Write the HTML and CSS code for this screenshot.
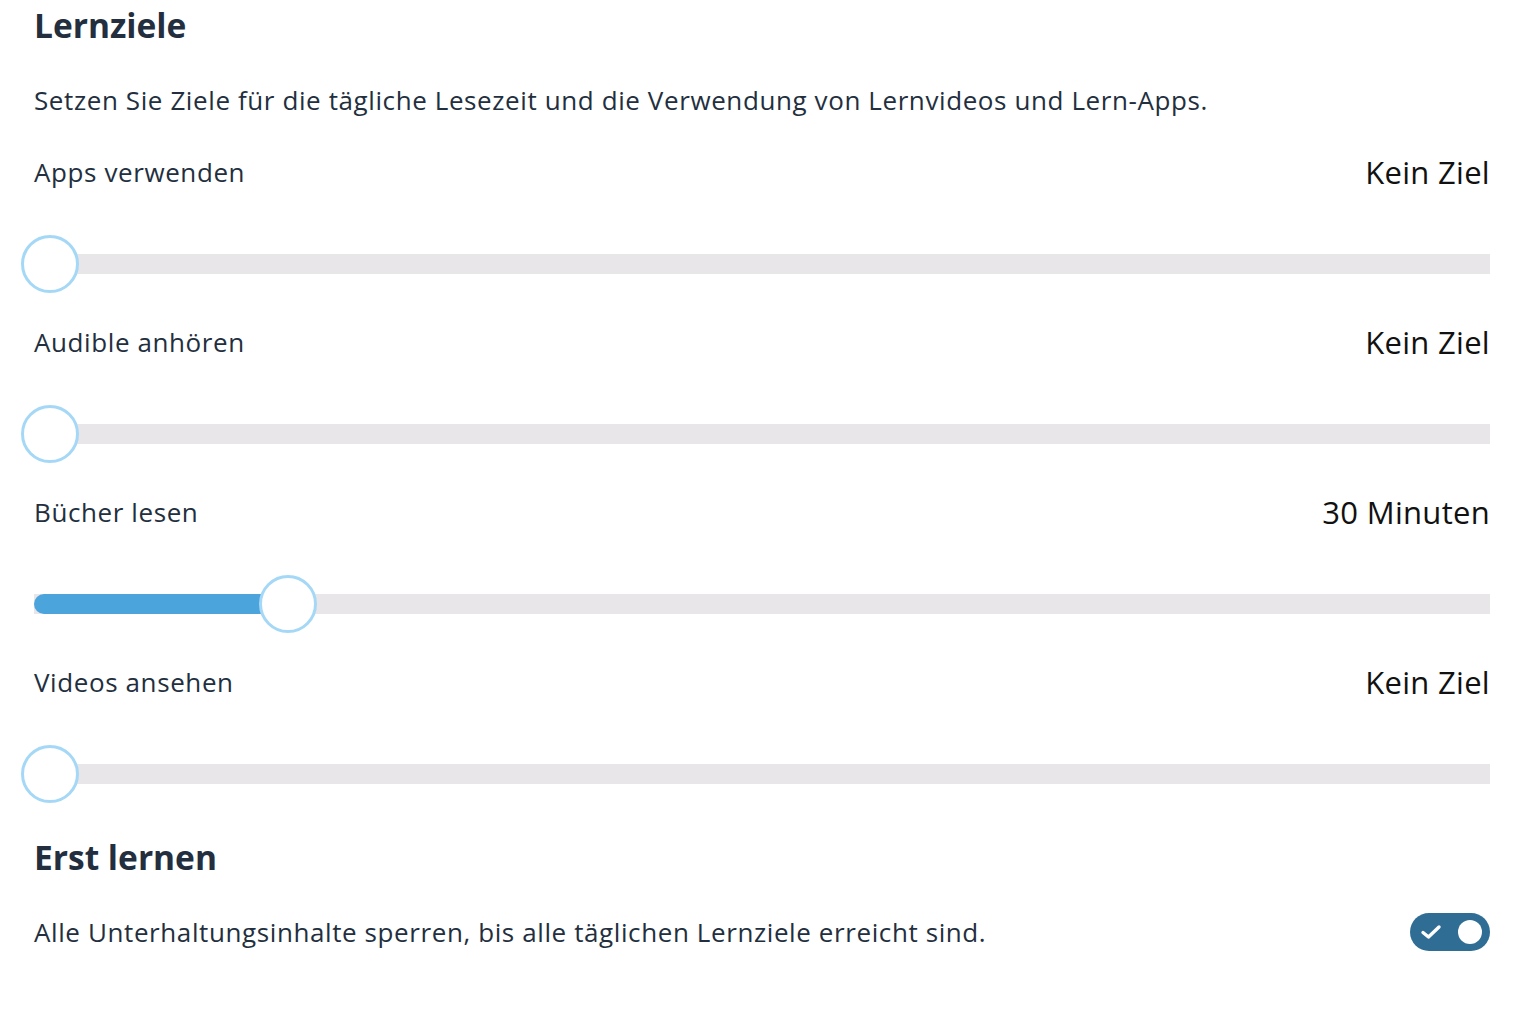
FILE: index.html
```html
<!DOCTYPE html>
<html lang="de">
<head>
<meta charset="utf-8">
<title>Lernziele</title>
<link rel="stylesheet" href="styles.css">
</head>
<body>
<main class="page">
  <h2 class="section-title">Lernziele</h2>
  <p class="section-desc">Setzen Sie Ziele für die tägliche Lesezeit und die Verwendung von Lernvideos und Lern-Apps.</p>

  <div class="goal">
    <div class="goal-head"><span class="goal-label">Apps verwenden</span><span class="goal-value">Kein Ziel</span></div>
    <div class="slider">
      <div class="track"><div class="fill" style="width:0px"></div></div>
      <div class="thumb" style="left:-13px"></div>
    </div>
  </div>

  <div class="goal">
    <div class="goal-head"><span class="goal-label">Audible anhören</span><span class="goal-value">Kein Ziel</span></div>
    <div class="slider">
      <div class="track"><div class="fill" style="width:0px"></div></div>
      <div class="thumb" style="left:-13px"></div>
    </div>
  </div>

  <div class="goal">
    <div class="goal-head"><span class="goal-label">Bücher lesen</span><span class="goal-value">30 Minuten</span></div>
    <div class="slider">
      <div class="track"><div class="fill" style="width:256px"></div></div>
      <div class="thumb" style="left:225px"></div>
    </div>
  </div>

  <div class="goal">
    <div class="goal-head"><span class="goal-label">Videos ansehen</span><span class="goal-value">Kein Ziel</span></div>
    <div class="slider">
      <div class="track"><div class="fill" style="width:0px"></div></div>
      <div class="thumb" style="left:-13px"></div>
    </div>
  </div>

  <h2 class="section-title second">Erst lernen</h2>
  <div class="toggle-row">
    <span class="section-desc inline">Alle Unterhaltungsinhalte sperren, bis alle täglichen Lernziele erreicht sind.</span>
    <button class="toggle" aria-pressed="true">
      <svg class="toggle-check" width="22" height="16" viewBox="0 0 22 16"><path d="M3 8.5 L8.5 13 L19 3" fill="none" stroke="#fff" stroke-width="3.4" stroke-linecap="round" stroke-linejoin="round"/></svg>
      <span class="toggle-knob"></span>
    </button>
  </div>
</main>
</body>
</html>
```

FILE: styles.css
```css
* { box-sizing: border-box; }
html, body { margin: 0; padding: 0; background: #fff; }
body {
  font-family: "Open Sans", "Noto Sans", "Liberation Sans", sans-serif;
  color: #232f3e;
}
.page {
  padding: 0 32px 0 34px;
}
.section-title {
  margin: 0;
  font-size: 33.5px;
  line-height: 50px;
  font-weight: 700;
  color: #232f3e;
}
.section-title.second {
  margin-top: 29px;
}
.section-desc {
  margin: 30px 0 0;
  font-size: 26px;
  letter-spacing: 0.6px;
  line-height: 40px;
  color: #232f3e;
}
.section-desc.inline { margin: 0; }
.goal {
  margin-top: 32px;
}
.goal + .goal { margin-top: 29px; }
.goal-head {
  display: flex;
  justify-content: space-between;
  align-items: center;
  height: 40px;
}
.goal-label {
  font-size: 26px;
  letter-spacing: 0.6px;
  line-height: 40px;
  color: #232f3e;
}
.goal-value {
  font-size: 31px;
  letter-spacing: 0.3px;
  line-height: 40px;
  color: #111111;
}
.slider {
  position: relative;
  height: 58px;
  margin-top: 43px;
  display: flex;
  align-items: center;
}
.track {
  width: 100%;
  height: 20px;
  background: #e8e6e9;
  display: flex;
}
.fill {
  height: 100%;
  background: #4ba4dc;
  border-radius: 10px 0 0 10px;
}
.thumb {
  position: absolute;
  top: 0;
  width: 58px;
  height: 58px;
  border-radius: 50%;
  background: #fff;
  border: 3px solid #a5d8f6;
}
.toggle-row {
  margin-top: 30px;
  display: flex;
  justify-content: space-between;
  align-items: center;
  height: 40px;
}
.toggle {
  width: 80px;
  height: 38px;
  border: 0;
  padding: 0 8px 0 10px;
  border-radius: 19px;
  background: #2f6d94;
  display: flex;
  align-items: center;
  justify-content: space-between;
  cursor: pointer;
}
.toggle-check { display: block; }
.toggle-knob {
  width: 24px;
  height: 24px;
  border-radius: 50%;
  background: #fff;
}
```
